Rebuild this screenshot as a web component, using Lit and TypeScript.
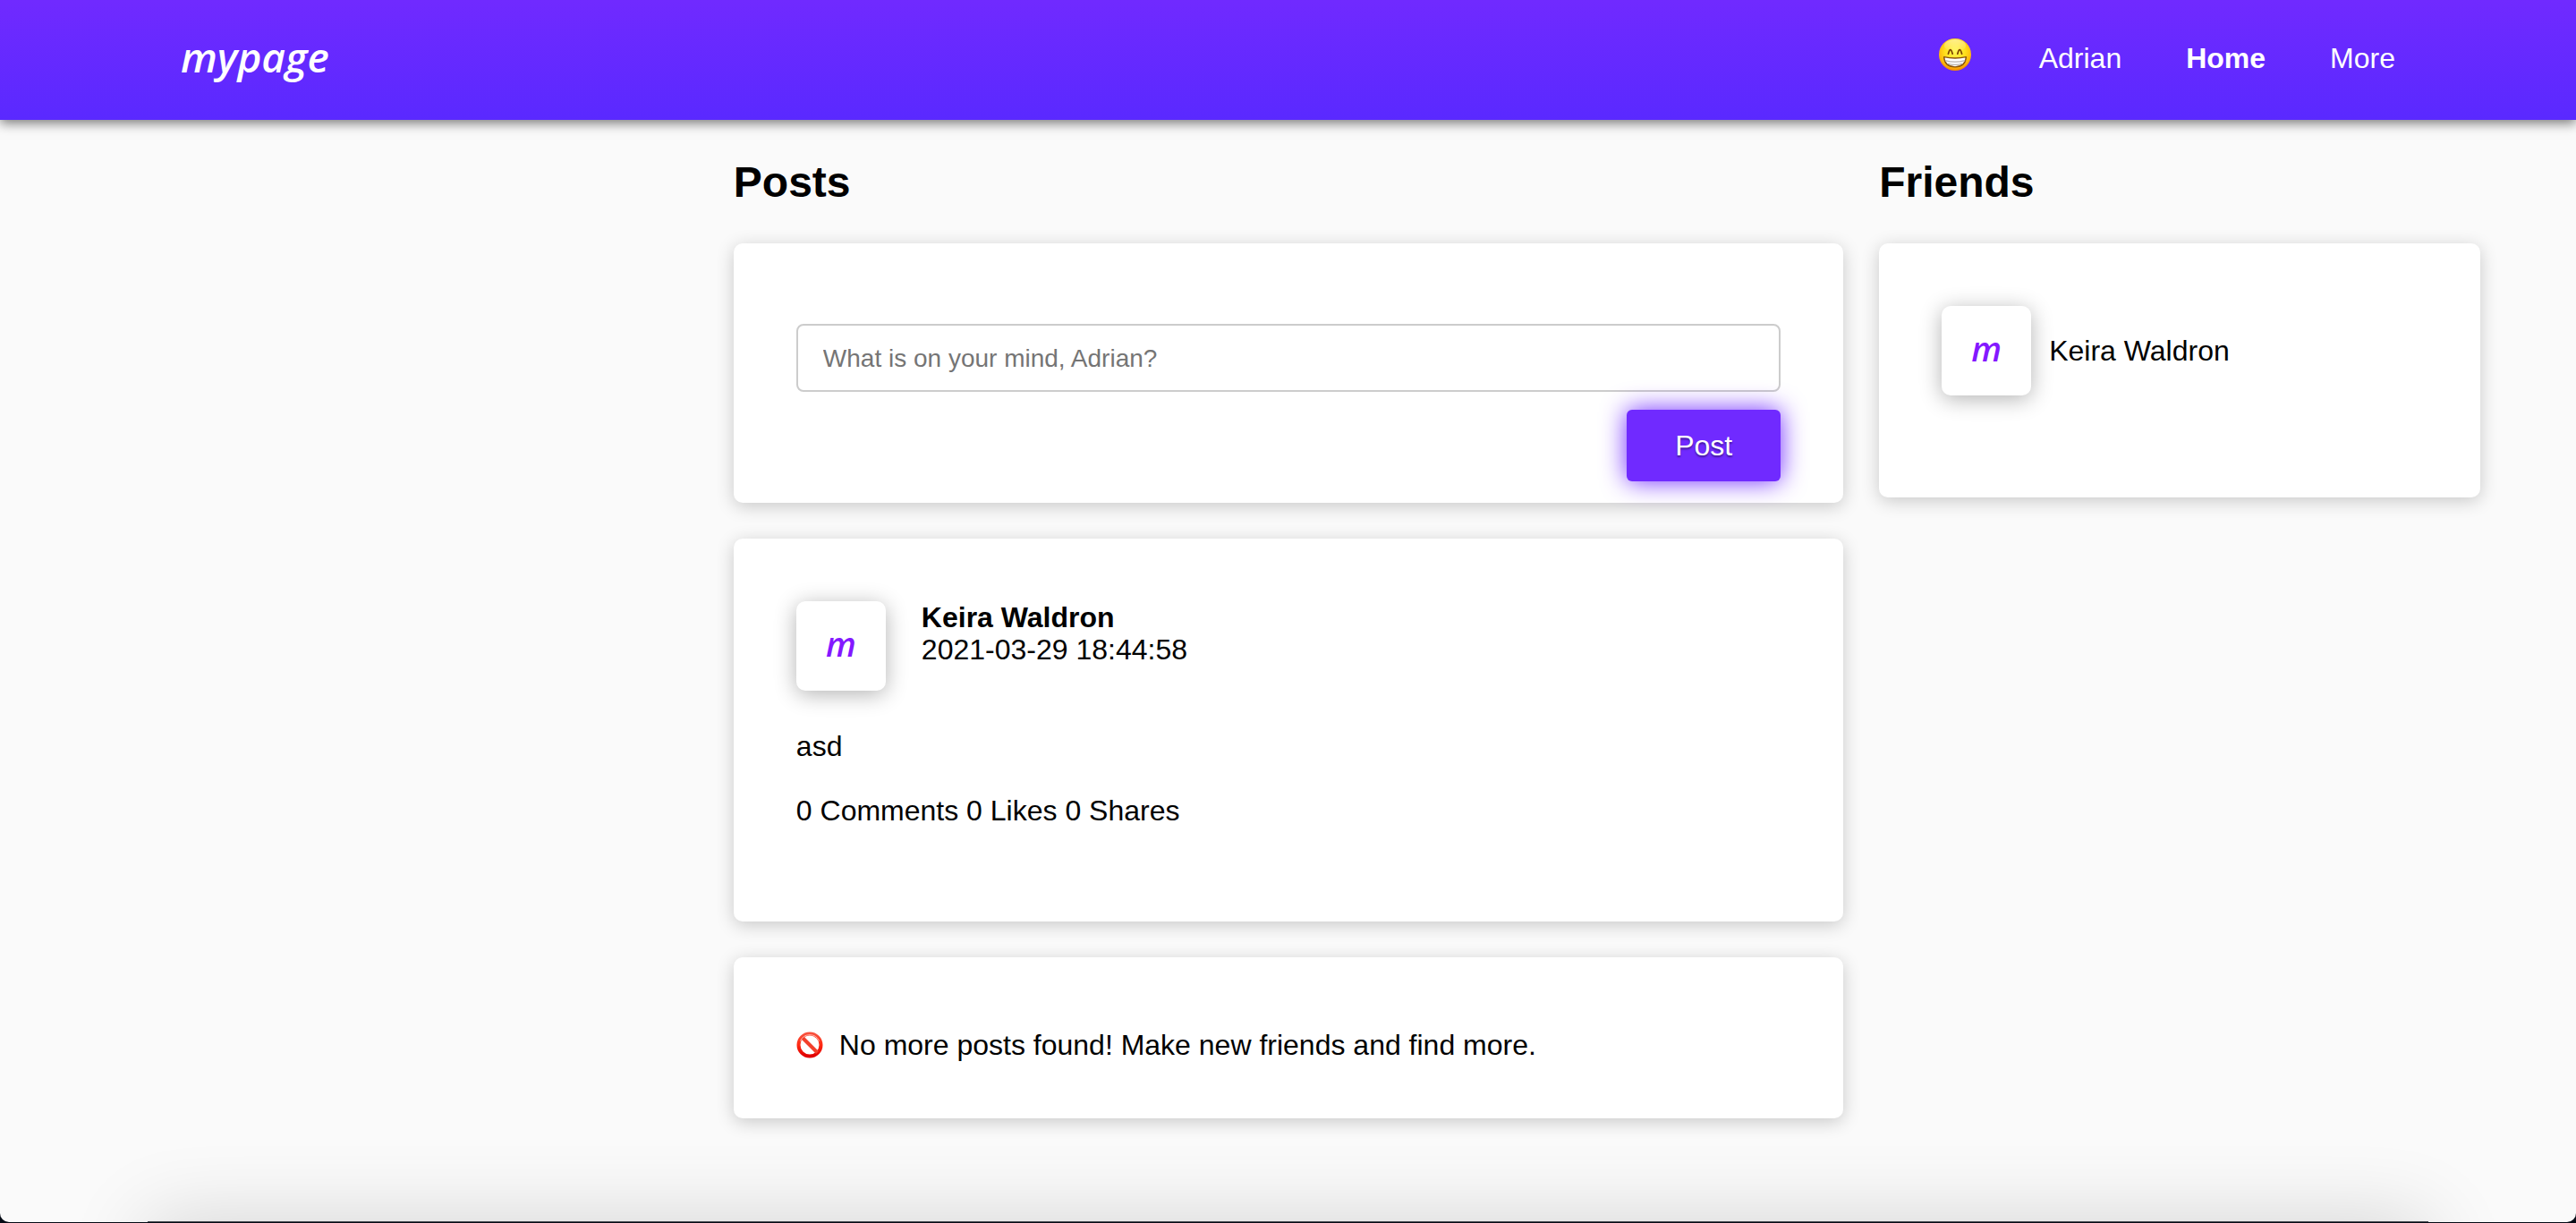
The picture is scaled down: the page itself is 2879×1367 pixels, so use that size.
import { LitElement, html, svg, css } from "lit";
import { customElement, property } from "lit/decorators.js";

interface Post {
  author: string;
  date: string;
  text: string;
  comments: number;
  likes: number;
  shares: number;
}

const grinIcon = svg`
  <defs>
    <radialGradient id="face" cx="0.5" cy="0.38" r="0.64">
      <stop offset="0" stop-color="#fff65a" />
      <stop offset="0.5" stop-color="#ffe01c" />
      <stop offset="0.8" stop-color="#ffb80f" />
      <stop offset="1" stop-color="#ee7d00" />
    </radialGradient>
    <linearGradient id="shine" x1="0" y1="0" x2="0" y2="1">
      <stop offset="0" stop-color="#fff" stop-opacity="0.5" />
      <stop offset="1" stop-color="#fff" stop-opacity="0" />
    </linearGradient>
  </defs>
  <circle cx="18" cy="18" r="18" fill="url(#face)" />
  <ellipse cx="18" cy="8" rx="12" ry="7" fill="url(#shine)" />
  <path d="M10.4 17.2q2.4-9 4.8 0M20.8 17.2q2.4-9 4.8 0" fill="none" stroke="#7b4300" stroke-width="1.7" stroke-linecap="round" />
  <path d="M5.6 20.6Q18 23.4 30.4 20.6Q29.8 31.4 18 31.8Q6.2 31.4 5.6 20.6z" fill="#fff" stroke="#8b5206" stroke-width="1.3" stroke-linejoin="round" />
  <path d="M6.8 24.6Q18 27.8 29.2 24.6M9.6 28.2Q18 30.6 26.4 28.2" fill="none" stroke="#b9b3b0" stroke-width="1.2" />
`;

const forbiddenIcon = svg`
  <defs>
    <linearGradient id="ring" x1="0" y1="0" x2="0" y2="1">
      <stop offset="0" stop-color="#f8503c" />
      <stop offset="0.5" stop-color="#ff2a12" />
      <stop offset="1" stop-color="#e00000" />
    </linearGradient>
  </defs>
  <circle cx="15" cy="15" r="12.5" fill="none" stroke="url(#ring)" stroke-width="4" />
  <path d="M6.5 6.5L23.5 23.5" stroke="#f2402c" stroke-width="4" />
  <path d="M4.5 10.5A11.5 11.5 0 0 1 25.5 10.5" fill="none" stroke="#ffb9ae" stroke-width="1" />
`;

@customElement("user-avatar")
class UserAvatar extends LitElement {
  @property() initial = "m";

  static styles = css`
    :host {
      display: flex;
      flex: none;
      justify-content: center;
      width: 100px;
      height: 100px;
      border-radius: 10px;
      background: #fff;
      box-shadow: 0 4px 24px rgba(0, 0, 0, 0.3);
    }
    .initial {
      color: #8418ff;
      font: italic 600 38px/94px "Open Sans", "Noto Sans", sans-serif;
    }
  `;

  render() {
    return html`<span class="initial">${this.initial}</span>`;
  }
}

@customElement("app-root")
class AppRoot extends LitElement {
  private user = "Adrian";
  private posts: Post[] = [
    {
      author: "Keira Waldron",
      date: "2021-03-29 18:44:58",
      text: "asd",
      comments: 0,
      likes: 0,
      shares: 0,
    },
  ];
  private friends = ["Keira Waldron"];

  static styles = css`
    :host {
      display: block;
      min-height: 100vh;
      background: #050a14;
      color: #000;
      font: 32px/36px "Liberation Sans", Arial, sans-serif;
    }
    * {
      box-sizing: border-box;
    }
    h1,
    h2,
    p {
      margin: 0;
    }
    .page {
      position: relative;
      display: flow-root;
      min-height: calc(100vh - 1px);
      overflow: hidden;
      border-radius: 0 0 10px 10px;
      background: #fafafa;
    }
    .topbar {
      display: flex;
      align-items: flex-start;
      justify-content: space-between;
      padding: 47px 202px 51px;
      background: linear-gradient(#702aff, #5a29ff);
      box-shadow: 0 4px 12px rgba(0, 0, 0, 0.5);
    }
    a {
      color: inherit;
      text-decoration: none;
    }
    .brand {
      color: #fff;
      font: italic 600 46px/32px "Open Sans", "Noto Sans", sans-serif;
    }
    .nav {
      display: flex;
      gap: 72px;
      color: #fff;
    }
    .nav .current {
      font-weight: 700;
    }
    .mood {
      width: 44px;
    }
    .mood svg {
      display: block;
      width: 36px;
      height: 36px;
      margin: -4px auto 0;
    }
    .columns {
      display: grid;
      grid-template-columns: 26fr 48fr 26fr;
      gap: 40px;
      padding: 42px 107px 114px 108px;
    }
    .column {
      display: flex;
      flex-direction: column;
      gap: 40px;
      min-width: 0;
    }
    .posts {
      grid-column: 2;
    }
    .title {
      font-size: 48px;
      font-weight: 700;
      line-height: 56px;
    }
    .card {
      padding: 70px;
      border-radius: 10px;
      background: #fff;
      box-shadow: 0 4px 20px rgba(0, 0, 0, 0.2);
    }
    .composer {
      display: flex;
      flex-direction: column;
      gap: 20px;
      padding: 90px 70px 24px;
    }
    .field {
      width: 100%;
      height: 76px;
      padding: 2px 28px 0;
      border: 2px solid #ccc;
      border-radius: 8px;
      background: #fff;
      color: #000;
      font: 28px "Liberation Sans", Arial, sans-serif;
    }
    .field::placeholder {
      color: #757575;
      opacity: 1;
    }
    .submit {
      align-self: flex-end;
      height: 80px;
      padding: 0 54px;
      border: 0;
      border-radius: 6px;
      background: #702aff;
      box-shadow: 0 0 28px #702aff;
      color: #fff;
      font: 32px "Liberation Sans", Arial, sans-serif;
      text-shadow: 0 2px 2px rgba(0, 0, 0, 0.4);
    }
    .author {
      display: flex;
      gap: 40px;
      margin-bottom: 44px;
    }
    .name {
      font-weight: 700;
    }
    .post p {
      margin-bottom: 36px;
    }
    .friend {
      display: flex;
      align-items: center;
      gap: 20px;
      margin-bottom: 44px;
    }
    .empty {
      display: flex;
      align-items: center;
      gap: 18px;
      padding: 80px 70px 64px;
    }
    .empty svg {
      flex: none;
      width: 30px;
      height: 30px;
    }
    .dock {
      position: absolute;
      top: calc(100% - 1px);
      left: 165px;
      right: 165px;
      height: 100px;
      background: #4a4d52;
      box-shadow: 0 0 90px rgba(0, 0, 0, 0.16);
      pointer-events: none;
    }
  `;

  render() {
    return html`
      <div class="page">
        <header class="topbar">
          <a class="brand" href="#home">mypage</a>
          <nav class="nav">
            <a class="mood" href="#mood" aria-label="Mood">
              <svg viewBox="0 0 36 36" aria-hidden="true">${grinIcon}</svg>
            </a>
            <a href="#profile">${this.user}</a>
            <a class="current" href="#home">Home</a>
            <a href="#more">More</a>
          </nav>
        </header>
        <main class="columns">
          <section class="column posts">
            <h1 class="title">Posts</h1>
            <form class="card composer" @submit=${(e: Event) => e.preventDefault()}>
              <input
                class="field"
                type="text"
                aria-label="What is on your mind, ${this.user}?"
                placeholder="What is on your mind, ${this.user}?"
              />
              <button class="submit" type="submit">Post</button>
            </form>
            ${this.posts.map(
              (post) => html`
                <article class="card post">
                  <div class="author">
                    <user-avatar></user-avatar>
                    <div>
                      <div class="name">${post.author}</div>
                      <time>${post.date}</time>
                    </div>
                  </div>
                  <p>${post.text}</p>
                  <p>${post.comments} Comments ${post.likes} Likes ${post.shares} Shares</p>
                </article>
              `
            )}
            <div class="card empty">
              <svg viewBox="0 0 30 30" aria-hidden="true">${forbiddenIcon}</svg>
              <p>No more posts found! Make new friends and find more.</p>
            </div>
          </section>
          <aside class="column">
            <h2 class="title">Friends</h2>
            <div class="card">
              ${this.friends.map(
                (name) => html`
                  <div class="friend">
                    <user-avatar></user-avatar>
                    <a href="#friend">${name}</a>
                  </div>
                `
              )}
            </div>
          </aside>
        </main>
        <div class="dock"></div>
      </div>
    `;
  }
}
